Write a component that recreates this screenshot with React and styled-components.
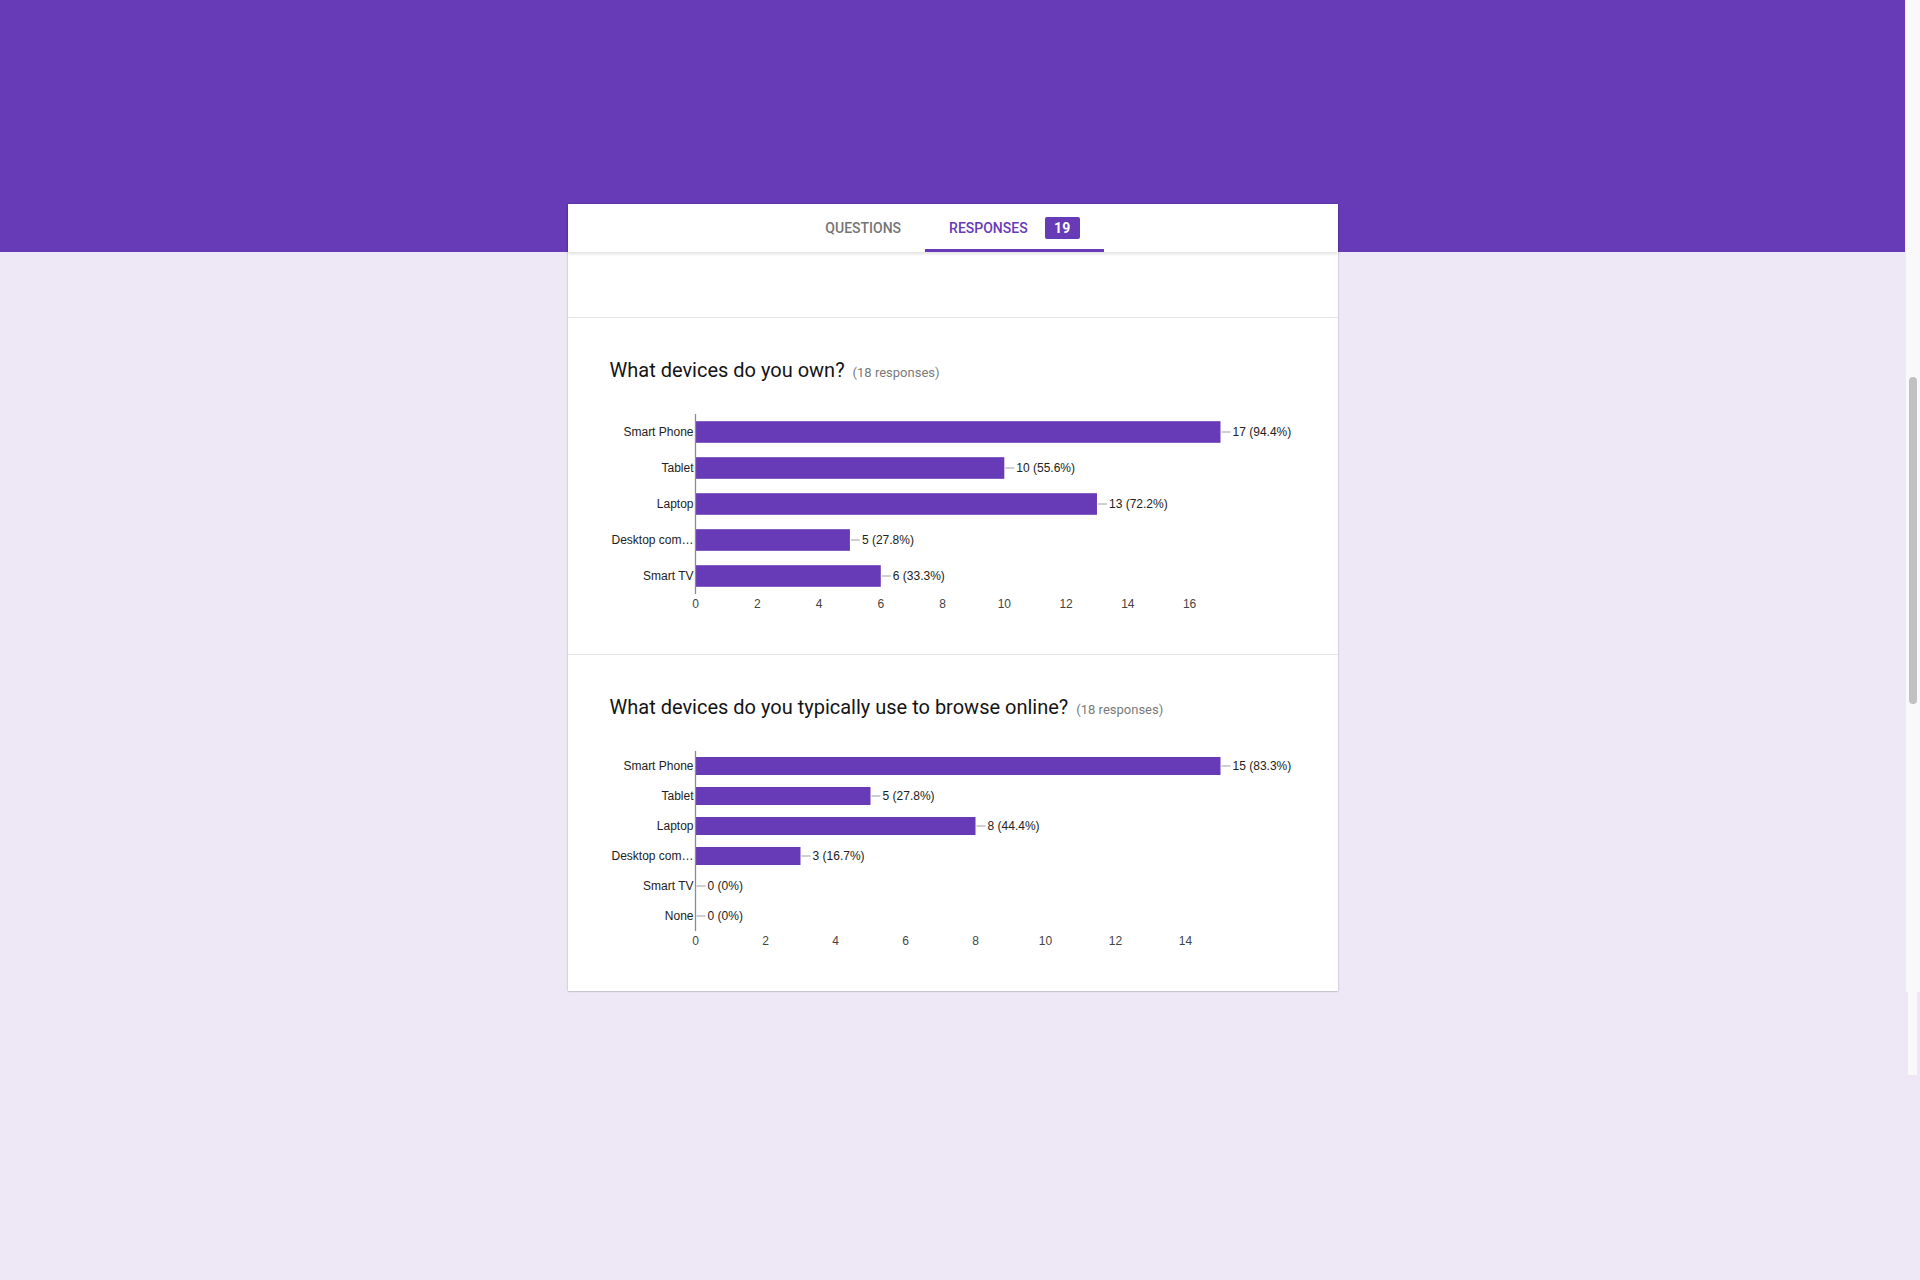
//____________IMPORT/EXPORT____________
import styled, { createGlobalStyle } from 'styled-components';
//____________IMPORT/EXPORT____________

//____________DATA____________
const questions = [
    {
        title: 'What devices do you own?',
        count: 18,
        rows: [
            { label: 'Smart Phone', value: 17, pct: '94.4%' },
            { label: 'Tablet', value: 10, pct: '55.6%' },
            { label: 'Laptop', value: 13, pct: '72.2%' },
            { label: 'Desktop com…', value: 5, pct: '27.8%' },
            { label: 'Smart TV', value: 6, pct: '33.3%' },
        ],
        ticks: [0, 2, 4, 6, 8, 10, 12, 14, 16],
    },
    {
        title: 'What devices do you typically use to browse online?',
        count: 18,
        rows: [
            { label: 'Smart Phone', value: 15, pct: '83.3%' },
            { label: 'Tablet', value: 5, pct: '27.8%' },
            { label: 'Laptop', value: 8, pct: '44.4%' },
            { label: 'Desktop com…', value: 3, pct: '16.7%' },
            { label: 'Smart TV', value: 0, pct: '0%' },
            { label: 'None', value: 0, pct: '0%' },
        ],
        ticks: [0, 2, 4, 6, 8, 10, 12, 14],
    },
];
//____________DATA____________

//____________GLOBAL____________
const GlobalStyle = createGlobalStyle`
    html, body {
        margin: 0;
        padding: 0;
        background-color: #ede7f6;
        font-family: Roboto, "Liberation Sans", Arial, sans-serif;
    }
`;
//____________GLOBAL____________

//____________PAGE____________
const Page = styled.div`
    display: flex;
    align-items: flex-start;
    min-height: 1280px;
`;
const Main = styled.div`
    flex: 1;
    min-width: 0;
`;
const Header = styled.div`
    height: 252px;
    background-color: #673ab7;
`;
//____________PAGE____________

//____________SCROLLBAR____________
const ScrollColumn = styled.div`
    width: 15px;
    display: flex;
    flex-direction: column;
`;
const ScrollTrack = styled.div`
    height: 992px;
    background-color: #f9f9f9;
    border-left: 1px solid #ececec;
    box-sizing: border-box;
    padding: 377px 3px 0 3px;
`;
const ScrollThumb = styled.div`
    height: 327px;
    border-radius: 4px;
    background-color: #c1c1c1;
`;
const ScrollStub = styled.div`
    width: 9px;
    height: 83px;
    margin-left: 3px;
    background-color: #f9f9f9;
`;
//____________SCROLLBAR____________

//____________CARD____________
const Card = styled.div`
    width: 770px;
    margin: -48px auto 0 auto;
    background-color: white;
    box-shadow: 0 0 2px rgba(0, 0, 0, 0.22), 0 1px 1px rgba(0, 0, 0, 0.08);
`;
const TabBar = styled.div`
    position: relative;
    z-index: 1;
    height: 48px;
    display: flex;
    justify-content: center;
    background-color: white;
    box-shadow: 0 2px 3px rgba(0, 0, 0, 0.12);
`;
const Tab = styled.div`
    display: flex;
    align-items: center;
    gap: 17px;
    padding: 3px 24px 0 24px;
    box-sizing: border-box;
    font-size: 14px;
    font-weight: 500;
    text-transform: uppercase;
    color: ${(props) => (props.$active ? '#673ab7' : '#757575')};
    border-bottom: 3px solid ${(props) => (props.$active ? '#673ab7' : 'transparent')};
`;
const Badge = styled.span`
    display: flex;
    align-items: center;
    justify-content: center;
    width: 35px;
    height: 22px;
    border-radius: 2px;
    background-color: #673ab7;
    color: white;
    font-weight: 700;
    font-size: 14px;
`;
const Spacer = styled.div`
    height: 65px;
`;
const Section = styled.div`
    border-top: 1px solid #e6e6e6;
    padding: 40px 0 30px 0;
`;
const Title = styled.div`
    display: flex;
    align-items: baseline;
    gap: 8px;
    height: 24px;
    padding-left: 42px;
    font-size: 20px;
    line-height: 24px;
    color: #141414;
`;
const Count = styled.span`
    font-size: 13px;
    line-height: 16px;
    color: #7a7a7a;
`;
const ChartSvg = styled.svg`
    display: block;
    margin-top: 18px;
    font-family: "Liberation Sans", Arial, sans-serif;
    font-size: 12px;
`;
//____________CARD____________

//____________CHART____________
function BarChart({ rows, ticks }) {
    const axisX = 127.5;
    const top = 14;
    const plotH = 180;
    const plotW = 525;
    const rowH = plotH / rows.length;
    const barH = rowH * 0.6;
    const max = Math.max(...rows.map((r) => r.value));
    const unit = plotW / max;
    return (
        <ChartSvg width="770" height="224" viewBox="0 0 770 224">
            {rows.map((r, i) => {
                const cy = top + rowH * i + rowH / 2;
                const end = axisX + r.value * unit;
                return (
                    <g key={i}>
                        <text x={axisX - 2} y={cy + 4} textAnchor="end" fill="#222">{r.label}</text>
                        {r.value > 0 && (
                            <rect x={axisX} y={cy - barH / 2} width={r.value * unit} height={barH} fill="#673ab7" />
                        )}
                        <line x1={end + 1} x2={end + 10} y1={cy} y2={cy} stroke="#9e9e9e" strokeWidth="1" />
                        <text x={end + 12} y={cy + 4} fill="#222">{r.value} ({r.pct})</text>
                    </g>
                );
            })}
            <line x1={axisX} x2={axisX} y1={top} y2={top + plotH} stroke="#8c8c8c" strokeWidth="1.3" />
            {ticks.map((t) => (
                <text key={t} x={axisX + t * unit} y={top + plotH + 14} textAnchor="middle" fill="#444">{t}</text>
            ))}
        </ChartSvg>
    );
}
//____________CHART____________

export default function App() {
    return (
        <>
            <GlobalStyle />
            <Page>
                <Main>
                    <Header />
                    <Card>
                        <TabBar>
                            <Tab>Questions</Tab>
                            <Tab $active>
                                Responses
                                <Badge>19</Badge>
                            </Tab>
                        </TabBar>
                        <Spacer />
                        {questions.map((q) => (
                            <Section key={q.title}>
                                <Title>
                                    {q.title}
                                    <Count>({q.count} responses)</Count>
                                </Title>
                                <BarChart rows={q.rows} ticks={q.ticks} />
                            </Section>
                        ))}
                    </Card>
                </Main>
                <ScrollColumn>
                    <ScrollTrack>
                        <ScrollThumb />
                    </ScrollTrack>
                    <ScrollStub />
                </ScrollColumn>
            </Page>
        </>
    );
}
